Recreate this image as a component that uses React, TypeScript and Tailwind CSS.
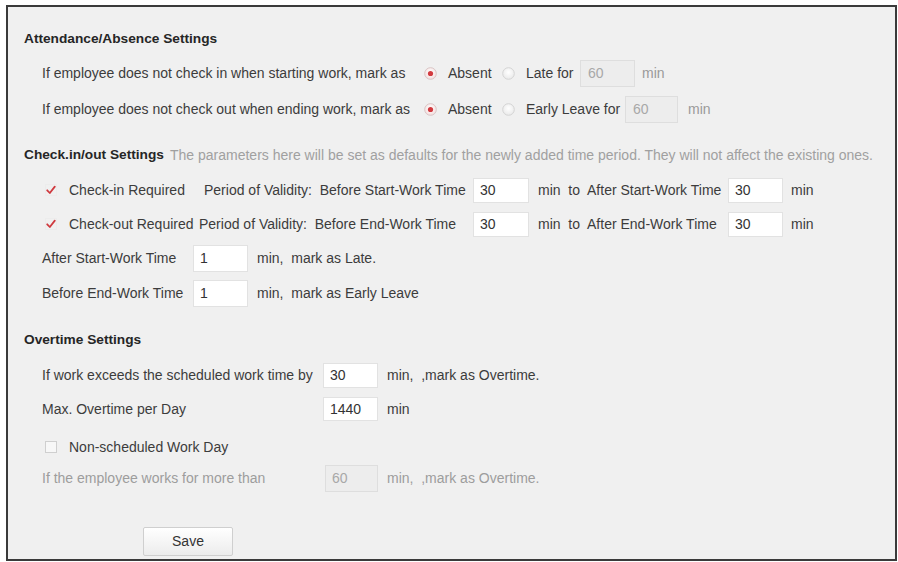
import React from "react";

const FONT = { fontFamily: '"Liberation Sans", Arial, sans-serif' };

function Radio({ on }: { on?: boolean }) {
  return (
    <svg width="13" height="13" viewBox="0 0 13 13" className="shrink-0">
      <defs>
        <radialGradient id={on ? "rgOn" : "rgOff"} cx="50%" cy="40%" r="60%">
          <stop offset="0%" stopColor="#ffffff" />
          <stop offset="100%" stopColor={on ? "#f3dede" : "#e9e9e9"} />
        </radialGradient>
      </defs>
      <circle cx="6.5" cy="6.5" r="5.8" fill={`url(#${on ? "rgOn" : "rgOff"})`} stroke={on ? "#d9c4c4" : "#d4d4d4"} strokeWidth="1" />
      {on && <circle cx="6.5" cy="6.5" r="2.6" fill="#d23a3f" />}
    </svg>
  );
}

function Check({ on }: { on?: boolean }) {
  return (
    <svg width="12" height="12" viewBox="0 0 12 12" className="shrink-0">
      <rect x="0.5" y="0.5" width="11" height="11" fill={on ? "none" : "#f7f7f7"} stroke={on ? "#ececec" : "#cfcfcf"} />
      {on && <path d="M2.2 6.3 L4.8 9 L9.8 2.6" fill="none" stroke="#cf3a3f" strokeWidth="1.8" strokeLinecap="round" strokeLinejoin="round" />}
    </svg>
  );
}

function Field({ v, w = 55, h = 27, disabled, pl = 6 }: { v: string; w?: number; h?: number; disabled?: boolean; pl?: number }) {
  return (
    <div
      className={`shrink-0 flex items-center border ${disabled ? "bg-[#ededed] border-[#dedede] text-[#a8a8a8]" : "bg-white border-[#e2e2e2] text-[#333]"}`}
      style={{ width: w, height: h, paddingLeft: pl }}
    >
      {v}
    </div>
  );
}

export default function App() {
  return (
    <div className="w-[898px] h-[562px] bg-white pl-[6px] pt-[5px] text-[14px] text-[#3c3c3c] overflow-hidden" style={FONT}>
      <div className="w-[891px] h-[556px] border-2 border-[#3a3a3a] bg-[#f0f0f0] pl-[16px] pt-[17px] flex flex-col">
        {/* Attendance/Absence */}
        <div className="h-[30px] flex items-center font-bold text-[#262626] text-[13.7px]">Attendance/Absence Settings</div>
        <div className="h-[30px] mt-[4px] ml-[18px] flex items-center">
          <span className="w-[382px] shrink-0 whitespace-nowrap">If employee does not check in when starting work, mark as</span>
          <Radio on />
          <span className="ml-[11px] w-[54px] shrink-0">Absent</span>
          <Radio />
          <span className="ml-[11px] w-[54px] shrink-0">Late for</span>
          <Field v="60" disabled pl={7} />
          <span className="ml-[7px] text-[#9a9a9a]">min</span>
        </div>
        <div className="h-[30px] mt-[6px] ml-[18px] flex items-center">
          <span className="w-[382px] shrink-0 whitespace-nowrap">If employee does not check out when ending work, mark as</span>
          <Radio on />
          <span className="ml-[11px] w-[54px] shrink-0">Absent</span>
          <Radio />
          <span className="ml-[11px] w-[99px] shrink-0 whitespace-nowrap">Early Leave for</span>
          <Field v="60" disabled w={53} pl={7} />
          <span className="ml-[10px] text-[#9a9a9a]">min</span>
        </div>

        {/* Check-in/out */}
        <div className="h-[30px] mt-[16px] flex items-center whitespace-nowrap">
          <span className="font-bold text-[#262626] text-[13.7px] w-[146px] shrink-0">Check.in/out Settings</span>
          <span className="text-[#a0a0a0]">The parameters here will be set as defaults for the newly added time period. They will not affect the existing ones.</span>
        </div>
        <div className="h-[30px] mt-[5px] ml-[18px] flex items-center whitespace-nowrap">
          <span className="ml-[3px]"><Check on /></span>
          <span className="ml-[12px] w-[135px] shrink-0">Check-in Required</span>
          <span className="w-[269px] shrink-0">Period of Validity:&nbsp; Before Start-Work Time</span>
          <Field v="30" w={56} h={25} />
          <span className="ml-[9px] w-[190px] shrink-0">min&nbsp; to&nbsp; After Start-Work Time</span>
          <Field v="30" w={55} h={25} />
          <span className="ml-[8px]">min</span>
        </div>
        <div className="h-[30px] mt-[4px] ml-[18px] flex items-center whitespace-nowrap">
          <span className="ml-[3px]"><Check on /></span>
          <span className="ml-[12px] w-[130px] shrink-0">Check-out Required</span>
          <span className="w-[274px] shrink-0">Period of Validity:&nbsp; Before End-Work Time</span>
          <Field v="30" w={56} h={25} />
          <span className="ml-[9px] w-[190px] shrink-0">min&nbsp; to&nbsp; After End-Work Time</span>
          <Field v="30" w={55} h={25} />
          <span className="ml-[8px]">min</span>
        </div>
        <div className="h-[30px] mt-[4px] ml-[18px] flex items-center whitespace-nowrap">
          <span className="w-[151px] shrink-0">After Start-Work Time</span>
          <Field v="1" />
          <span className="ml-[9px]">min,&nbsp; mark as Late.</span>
        </div>
        <div className="h-[30px] mt-[5px] ml-[18px] flex items-center whitespace-nowrap">
          <span className="w-[151px] shrink-0">Before End-Work Time</span>
          <Field v="1" />
          <span className="ml-[9px]">min,&nbsp; mark as Early Leave</span>
        </div>

        {/* Overtime */}
        <div className="h-[30px] mt-[17px] flex items-center font-bold text-[#262626] text-[13.7px]">Overtime Settings</div>
        <div className="h-[30px] mt-[5px] ml-[18px] flex items-center whitespace-nowrap">
          <span className="w-[281px] shrink-0">If work exceeds the scheduled work time by</span>
          <Field v="30" h={25} />
          <span className="ml-[9px]">min,&nbsp; ,mark as Overtime.</span>
        </div>
        <div className="h-[30px] mt-[4px] ml-[18px] flex items-center whitespace-nowrap">
          <span className="w-[281px] shrink-0">Max. Overtime per Day</span>
          <Field v="1440" h={24} />
          <span className="ml-[9px]">min</span>
        </div>
        <div className="h-[30px] mt-[8px] ml-[18px] flex items-center whitespace-nowrap">
          <span className="ml-[3px]"><Check /></span>
          <span className="ml-[12px]">Non-scheduled Work Day</span>
        </div>
        <div className="h-[30px] mt-[1px] ml-[18px] flex items-center whitespace-nowrap text-[#9d9d9d]">
          <span className="w-[283px] shrink-0">If the employee works for more than</span>
          <Field v="60" disabled w={53} />
          <span className="ml-[9px]">min,&nbsp; ,mark as Overtime.</span>
        </div>

        <div className="mt-[34px] ml-[119px]">
          <button className="w-[90px] h-[29px] border border-[#cfcfcf] rounded-[2px] bg-gradient-to-b from-white to-[#ececec] text-[#333] text-[14px]" style={FONT}>
            Save
          </button>
        </div>
      </div>
    </div>
  );
}
